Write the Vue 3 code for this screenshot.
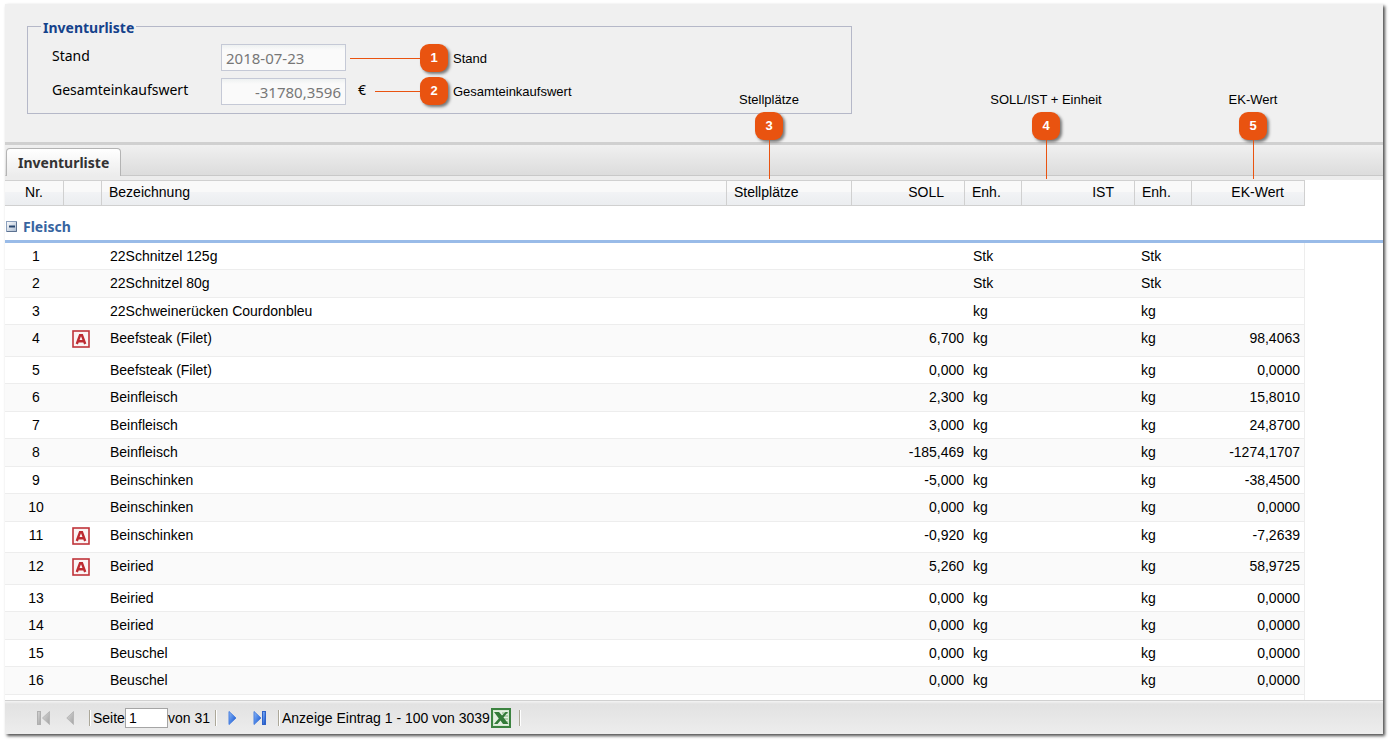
<script setup>
const notes = [
  { n: 1, text: 'Stand', dir: 'side', cls: 'note-stand' },
  { n: 2, text: 'Gesamteinkaufswert', dir: 'side', cls: 'note-total' },
  { n: 3, text: 'Stellplätze', dir: 'down', cls: 'note-places' },
  { n: 4, text: 'SOLL/IST + Einheit', dir: 'down', cls: 'note-units' },
  { n: 5, text: 'EK-Wert', dir: 'down', cls: 'note-value' },
]

const rows = [
  ['22Schnitzel 125g', '', 'Stk', ''],
  ['22Schnitzel 80g', '', 'Stk', ''],
  ['22Schweinerücken Courdonbleu', '', 'kg', ''],
  ['Beefsteak (Filet)', '6,700', 'kg', '98,4063', true],
  ['Beefsteak (Filet)', '0,000', 'kg', '0,0000'],
  ['Beinfleisch', '2,300', 'kg', '15,8010'],
  ['Beinfleisch', '3,000', 'kg', '24,8700'],
  ['Beinfleisch', '-185,469', 'kg', '-1274,1707'],
  ['Beinschinken', '-5,000', 'kg', '-38,4500'],
  ['Beinschinken', '0,000', 'kg', '0,0000'],
  ['Beinschinken', '-0,920', 'kg', '-7,2639', true],
  ['Beiried', '5,260', 'kg', '58,9725', true],
  ['Beiried', '0,000', 'kg', '0,0000'],
  ['Beiried', '0,000', 'kg', '0,0000'],
  ['Beuschel', '0,000', 'kg', '0,0000'],
  ['Beuschel', '0,000', 'kg', '0,0000'],
].map(([name, soll, unit, value, flagged = false]) => ({ name, soll, unit, value, flagged }))
</script>

<template>
  <main class="panel">
    <section class="summary">
      <fieldset class="box">
        <legend>Inventurliste</legend>
        <div class="field">
          <label for="stand">Stand</label>
          <input id="stand" type="text" value="2018-07-23" readonly />
        </div>
        <div class="field">
          <label for="total">Gesamteinkaufswert</label>
          <input id="total" class="right" type="text" value="-31780,3596" readonly />
          <span class="unit">€</span>
        </div>
      </fieldset>
    </section>

    <nav class="tabs">
      <button class="tab" type="button">Inventurliste</button>
    </nav>

    <div class="grid">
      <table>
        <colgroup>
          <col class="c-nr" /><col class="c-flag" /><col /><col class="c-place" />
          <col class="c-num" /><col class="c-unit" /><col class="c-num" /><col class="c-unit" />
          <col class="c-num" /><col class="c-rest" />
        </colgroup>
        <thead>
          <tr>
            <th class="center">Nr.</th>
            <th></th>
            <th>Bezeichnung</th>
            <th>Stellplätze</th>
            <th class="right">SOLL</th>
            <th>Enh.</th>
            <th class="right">IST</th>
            <th>Enh.</th>
            <th class="right">EK-Wert</th>
            <td></td>
          </tr>
        </thead>
        <tbody class="group">
          <tr>
            <td colspan="10">
              <button class="toggle" type="button">
                <svg width="12" height="12" viewBox="0 0 12 12" aria-hidden="true">
                  <defs>
                    <linearGradient id="tg" x1="0" y1="0" x2="1" y2="1">
                      <stop offset="0" stop-color="#fff" />
                      <stop offset="1" stop-color="#a9bad0" />
                    </linearGradient>
                  </defs>
                  <rect x=".5" y=".5" width="10" height="10" fill="url(#tg)" stroke="#8ba0bd" />
                  <path d="M1 10.500h9.500V1" fill="none" stroke="#5c7291" />
                  <path d="M3 5.500h6" stroke="#28466e" stroke-width="2" />
                </svg>
                <span>Fleisch</span>
              </button>
            </td>
          </tr>
        </tbody>
        <tbody class="items">
          <tr v-for="(row, i) in rows" :key="i" :class="{ flagged: row.flagged }">
            <td class="center">{{ i + 1 }}</td>
            <td class="flag">
              <svg v-if="row.flagged" width="18" height="18" viewBox="0 0 18 18" aria-hidden="true">
                <rect x="1" y="1" width="16" height="16" fill="#fbf4f4" stroke="#c0343a" stroke-width="1.6" />
                <path d="M4.800 14 L8 5.300 H10 L13.200 14 M6 11.300 H12" fill="none" stroke="#bd2a30" stroke-width="2.400" />
              </svg>
            </td>
            <td>{{ row.name }}</td>
            <td></td>
            <td class="right">{{ row.soll }}</td>
            <td>{{ row.unit }}</td>
            <td></td>
            <td class="ist-unit">{{ row.unit }}</td>
            <td class="right last">{{ row.value }}</td>
            <td class="rest"></td>
          </tr>
          <tr class="cut">
            <td colspan="9" class="last"></td>
            <td class="rest"></td>
          </tr>
        </tbody>
      </table>
    </div>

    <footer class="pager">
      <svg width="0" height="0" class="defs" aria-hidden="true">
        <defs>
          <linearGradient id="blue" x1="0" y1="0" x2="1" y2="1">
            <stop offset="0" stop-color="#8fb8f5" />
            <stop offset=".5" stop-color="#4a84e6" />
            <stop offset="1" stop-color="#1546b4" />
          </linearGradient>
          <linearGradient id="grey" x1="0" y1="0" x2="1" y2="1">
            <stop offset="0" stop-color="#d8d8d8" />
            <stop offset="1" stop-color="#a4a4a4" />
          </linearGradient>
        </defs>
      </svg>
      <button class="nav first" type="button" disabled aria-label="Erste Seite">
        <svg width="14" height="16" viewBox="0 0 14 16">
          <rect x=".5" y="1.500" width="3" height="13" fill="url(#grey)" stroke="#b0b0b0" />
          <path d="M12.500 1.500v13L5.500 8z" fill="url(#grey)" stroke="#b8b8b8" />
        </svg>
      </button>
      <button class="nav prev" type="button" disabled aria-label="Vorherige Seite">
        <svg width="9" height="16" viewBox="0 0 9 16">
          <path d="M7.500 1.500v13L.8 8z" fill="url(#grey)" stroke="#b8b8b8" />
        </svg>
      </button>
      <i class="sep"></i>
      <label for="page">Seite</label>
      <input id="page" type="text" value="1" />
      <span>von 31</span>
      <i class="sep after"></i>
      <button class="nav next" type="button" aria-label="Nächste Seite">
        <svg width="9" height="16" viewBox="0 0 9 16">
          <path d="M1 1.500v13L8 8z" fill="url(#blue)" stroke="#4a80e0" />
        </svg>
      </button>
      <button class="nav end" type="button" aria-label="Letzte Seite">
        <svg width="14" height="16" viewBox="0 0 14 16">
          <path d="M1 1.500v13L8 8z" fill="url(#blue)" stroke="#4a80e0" />
          <rect x="9.500" y="1.500" width="3" height="13" fill="url(#blue)" stroke="#2f62c8" />
        </svg>
      </button>
      <i class="sep"></i>
      <span>Anzeige Eintrag 1 - 100 von 3039</span>
      <button class="nav excel" type="button" aria-label="Excel-Export">
        <svg width="20" height="20" viewBox="0 0 20 20">
          <rect width="20" height="20" fill="#3c8340" />
          <rect x="2.500" y="2.500" width="15" height="15" fill="#e4f0e2" stroke="#d5e8d2" />
          <path d="M11 5h6M13 8h4M13 11h4M12 14h5" stroke="#7fb17b" />
          <path d="M3 4h5l3 3.500L14.500 4H17l-4.500 5.500L17.500 16H12l-2.500-3.500L6.500 16H3l4.800-5.500z" fill="#347b39" />
        </svg>
      </button>
      <i class="sep"></i>
    </footer>

    <div v-for="note in notes" :key="note.n" class="note" :class="[note.dir, note.cls]">
      <span class="caption">{{ note.text }}</span>
      <b class="badge">{{ note.n }}</b>
      <i class="line"></i>
    </div>
  </main>
</template>

<style>
body {
  background: #fff;
}
</style>

<style scoped>
* {
  box-sizing: border-box;
}
.panel {
  position: relative;
  display: flex;
  flex-direction: column;
  min-height: calc(100vh - 13px);
  margin: 4px 9px 9px 5px;
  background: #fff;
  box-shadow: 2px 2px 3px rgba(0, 0, 0, 0.7);
  font: 14px/16px "Liberation Sans", Arial, sans-serif;
  color: #000;
}
button {
  margin: 0;
  padding: 0;
  border: 0;
  background: none;
  font: inherit;
}
svg {
  display: block;
}
.right {
  text-align: right;
}
.center {
  text-align: center;
}

.summary {
  height: 138px;
  padding: 14px 22px;
  background: #f0f0f0;
}
.box {
  width: 825px;
  height: 96px;
  margin: 0;
  padding: 0 24px;
  border: 1px solid #b5b8c8;
  font: 14px/20px "Noto Sans", sans-serif;
}
.box legend {
  margin-left: -11px;
  padding: 0 2px;
  height: 16px;
  font: bold 14px/20px "Noto Sans", sans-serif;
  color: #15428b;
}
.field {
  display: flex;
  align-items: flex-start;
  height: 34px;
}
.field:first-of-type {
  margin-top: 10px;
}
.field label {
  width: 169px;
  padding-top: 2px;
}
.field input {
  width: 125px;
  height: 27px;
  padding: 1px 4px;
  border: 1px solid #c5c9d6;
  background: linear-gradient(#eef1f1, #fafafa 5px);
  font: 15px/20px "Noto Sans", sans-serif;
  color: #777;
}
.unit {
  margin: 2px 0 0 12px;
}

.tabs {
  height: 38px;
  padding: 3px 1px 0;
  border-top: 3px solid #d0d0d0;
  border-bottom: 4px solid #ececec;
  background: linear-gradient(#f0f0f0, #dcdcdc 30px, #c8c8c8 30px, #c8c8c8 31px);
}
.tab {
  height: 28px;
  padding: 0 11px;
  border: 1px solid #b4b4b4;
  border-bottom: 0;
  border-radius: 4px 4px 0 0;
  background: linear-gradient(#fff, #ececec);
  font: bold 14px/24px "Noto Sans", sans-serif;
  color: #333;
}

.grid {
  flex: 1;
}
table {
  width: 100%;
  border-collapse: separate;
  border-spacing: 0;
  table-layout: fixed;
}
.c-nr { width: 59px; }
.c-flag { width: 38px; }
.c-place { width: 125px; }
.c-num { width: 113px; }
.c-unit { width: 57px; }
.c-rest { width: 78px; }
th {
  height: 26px;
  padding: 0 7px 1px;
  border: solid #d0d0d0;
  border-width: 0 1px 1px 0;
  background: linear-gradient(#f9f9f9 50%, #f2f3f5 50%, #ebedf0);
  box-shadow: inset 0 1px #d0d0d0;
  font-weight: normal;
  text-align: left;
}
th.center {
  text-align: center;
}
th.right {
  padding-right: 20px;
  text-align: right;
}
.group td {
  height: 37px;
  padding: 8px 0 0;
  border-bottom: 3px solid #99bbe8;
}
.toggle {
  display: flex;
  align-items: center;
  gap: 5px;
  padding-left: 1px;
  font: bold 14px/18px "Noto Sans", sans-serif;
  color: #3764a0;
}
.items td {
  height: 27px;
  padding: 5px 8px 0;
  border-bottom: 1px solid #ededed;
  vertical-align: top;
}
.items td.center {
  padding: 5px 0 0 3px;
}
.items td.right {
  padding-right: 1px;
}
.items td.last {
  padding-right: 4px;
  border-right: 1px solid #ededed;
}
.items td.ist-unit {
  padding-left: 6px;
}
.items tr:nth-child(even) td {
  height: 28px;
  background: #fafafa;
}
.items tr.flagged td {
  height: 31px;
}
.items tr.flagged:nth-child(even) td {
  height: 32px;
}
.items td.flag {
  padding: 5px 0 0 8px;
}
.items tr td.rest {
  padding: 0;
  border: 0;
  background: none;
}
.items tr.cut td {
  height: 5px;
  padding: 0;
  border-bottom: 0;
}

.pager {
  display: flex;
  align-items: center;
  height: 34px;
  padding-left: 32px;
  border-top: 1px solid #d0d0d0;
  background: linear-gradient(#f4f4f4, #e2e2e2 3px, #ededed);
}
.defs {
  position: absolute;
}
.sep {
  width: 2px;
  height: 16px;
  border-left: 1px solid #aca899;
  border-right: 1px solid #fff;
}
.pager label,
.pager .sep + span {
  padding-left: 2px;
}
.pager input {
  width: 43px;
  height: 20px;
  padding: 0 3px;
  border: 1px solid #a5a5a5;
  background: #fff;
  font: inherit;
}
.after { margin-left: 5px; }
.prev { margin: 0 14px 0 15px; }
.next { margin: 0 16px 0 11px; }
.end { margin-right: 11px; }
.excel { margin: 0 8px 0 1px; }

.note {
  position: absolute;
  display: flex;
  align-items: center;
  font-size: 13px;
}
.badge {
  width: 28px;
  height: 28px;
  border-radius: 9px;
  background: #e95310;
  box-shadow: 2px 2px 3px rgba(0, 0, 0, 0.5);
  color: #fff;
  font-size: 13px;
  line-height: 28px;
  text-align: center;
}
.line {
  background: #e95310;
}
.side {
  flex-direction: row-reverse;
}
.side .caption {
  margin-left: 5px;
  padding-top: 2px;
}
.side .line {
  height: 1px;
}
.down {
  top: 88px;
  flex-direction: column;
  width: 140px;
}
.down .badge {
  margin-top: 4px;
}
.down .line {
  width: 1px;
  height: 39px;
}
.note-stand { top: 40px; left: 345px; }
.note-stand .line { width: 70px; }
.note-total { top: 73px; left: 370px; }
.note-total .line { width: 45px; }
.note-places { right: 544px; }
.note-units { right: 267px; }
.note-value { right: 60px; }
</style>
